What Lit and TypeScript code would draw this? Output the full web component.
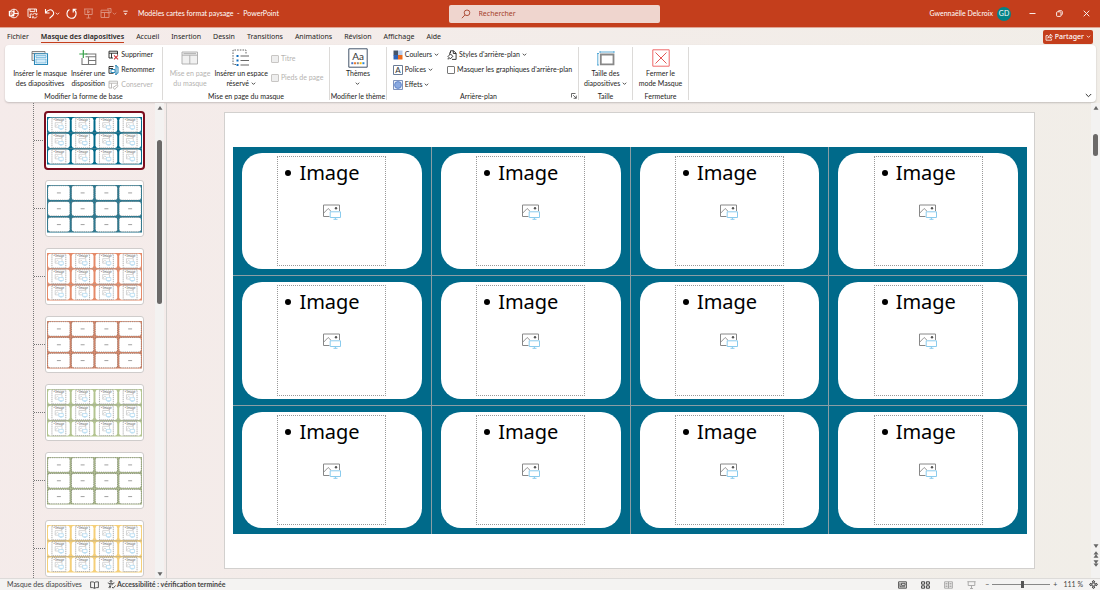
import { LitElement, html, svg, css, nothing } from "lit";
import { customElement, property } from "lit/decorators.js";
import { classMap } from "lit/directives/class-map.js";

const chev = html`<svg class="chev" width="5" height="5" viewBox="0 0 5 5" fill="none" stroke="currentColor" stroke-width=".8"><path d="M.8 1.7 2.5 3.4 4.2 1.7"/></svg>`;

const icon = (w: number, h: number, body: unknown) =>
  html`<svg width=${w} height=${h} viewBox="0 0 ${w} ${h}" fill="none" stroke="currentColor" stroke-width=".9" aria-hidden="true">${body}</svg>`;

const icons = {
  logo: icon(11, 11, svg`<circle cx="6" cy="5.5" r="4.3"/><path d="M6 1.2v4.3h4.3"/><rect x=".8" y="2.8" width="5.6" height="5.6" rx=".8" fill="#fff" stroke="none"/><path d="M2.8 7.4V4h1.1a1 1 0 0 1 0 2.1H2.8" stroke="#c43e1c"/>`),
  save: icon(11, 11, svg`<path d="M4 9.5H2.2L1 8.3V1h8.5v3.2M3 1v2.6h4.8V1M3.2 9.3V6h2"/><path d="M5.5 7.2a2.4 2.4 0 0 1 4.4-.6M10 5.2v1.6H8.4M10 8.4a2.4 2.4 0 0 1-4.3.5M5.4 10.3V8.8H7" stroke-width=".8"/>`),
  undo: icon(11, 11, svg`<path d="M1.5 1v4h4M1.7 4.8C4 1.4 7 1.2 8.6 2.8s1.3 3.5 0 4.7L5.5 10.3" stroke-width="1.1"/>`),
  redo: icon(11, 11, svg`<path d="M3.4 1.5C1.6 2.5.9 4 1 5.6a4.5 4.5 0 1 0 6.3-4M7.2 4.6V1.2h3.3" stroke-width="1.1"/>`),
  present: icon(11, 11, svg`<path d="M1 1h9M1.8 1v5.5h7.4V1M5.5 6.5V10M3.5 10h4M4.6 2.5v2.6l2-1.3z"/>`),
  layout: icon(12, 11, svg`<path d="M1 2.2h8v7.3H1zM1 4.5h8M4.5 4.5v5M7 1l4-.5v4L7.5 5"/>`),
  more: icon(5, 7, svg`<path d="M.3 1.2h4.4"/><path d="M.8 3.2h3.4L2.5 5z" fill="currentColor" stroke="none"/>`),
  search: icon(10, 10, svg`<circle cx="6" cy="3.8" r="2.8"/><path d="M4 5.9.9 9.2"/>`),
  min: icon(7, 7, svg`<path d="M.5 3.5h6"/>`),
  restore: icon(7, 7, svg`<rect x=".6" y="1.8" width="4.4" height="4.6" rx=".8"/><path d="M2.2 1.6C2.3.9 2.6.6 3.3.6h1.4c1.1 0 1.7.6 1.7 1.7v1.5c0 .7-.4 1-1 1.2"/>`),
  close: icon(7, 7, svg`<path d="m.7.7 5.6 5.6M6.3.7.7 6.3"/>`),
  share: icon(8, 8, svg`<path d="M3 2.6H1v4.6h5.6V5.6M2.8 5.2c.3-2 1.3-2.6 2.6-2.6V1.1l2 2.2-2 2V3.9C4.2 3.9 3.4 4.3 2.8 5.2z" stroke-width=".8"/>`),
  master: icon(18, 16, svg`<path d="M1 1.5h13v9H1z" fill="#eee" stroke="#777"/><path d="M1 3.5h13" stroke="#777"/><path d="M3.5 3.7h13v10.8h-13z" fill="#fff" stroke="#2b88b8" stroke-width="1.1"/><path d="M5 5.5h10v2H5zM5 9h10v4H5z" fill="#d3ebf9" stroke="#4aa3d2" stroke-width=".6"/>`),
  insLayout: icon(18, 16, svg`<path d="M6.5 4h10.3v10.5H3V8M6.5 6.8h10.3M9.5 6.8v7.7M9.5 10.5h7.3" stroke="#777" stroke-width="1.1"/><path d="M4.3 0v8M.3 4h8" stroke="#35a048" stroke-width="1.2"/>`),
  del: icon(11, 10, svg`<path d="M5 8H1V1.2h8.5v3.5M1 3.2h8.5M3.5 3.2V8"/><path d="m6 5.3 4 4M10 5.3l-4 4" stroke="#d13438" stroke-width="1.1"/>`),
  ren: icon(11, 10, svg`<path d="M5.5 8.3H1V1.5h4.5M1 3.5h4" /><path d="M8.4 1.8H10v6.4H8.4M3 4.5h4v3H3zM7 .7h2M8 .7v8.6M7 9.3h2" stroke="#2b88b8" stroke-width="1"/>`),
  keep: icon(11, 10, svg`<path d="M4 8H1V1.2h8.5v3M1 3.2h8.5M3.5 3.2V8M5 7.5l4.5-3 .5 1.8-2.8 2.4-.5.8z"/>`),
  pageLayout: icon(18, 16, svg`<path d="M1 2h15.5v12H1z" fill="#f1f1f1" stroke="#aaa"/><path d="M1 5.2h15.5M8.8 5.2V14M2.5 3.6H15" stroke="#aaa"/>`),
  placeholder: icon(18, 18, svg`<path d="M4 15.5H1V1h13v4" stroke="#555" stroke-dasharray="1.6 1.1"/><path d="M8.5 7H17M8.5 11.5H17M8.5 16H17" stroke="#666" stroke-width="1.1"/><path d="M4.5 6h2v2h-2zM4.5 10.5h2v2h-2zM4.5 15h2v2h-2z" fill="#0f6cbd" stroke="none"/>`),
  themes: html`<svg width="20" height="20" viewBox="0 0 20 20" aria-hidden="true"><path d="M.8.8h18.4v18.4H.8z" fill="#fff" stroke="#44546a" stroke-width="1"/><text x="10" y="12" text-anchor="middle" font-size="10" fill="#333">Aa</text><path d="M3.3 14.2h2v2h-2z" fill="#4472c4"/><path d="M6 14.2h2v2H6z" fill="#ed7d31"/><path d="M8.8 14.2h2v2h-2z" fill="#888"/><path d="M11.6 14.2h2v2h-2z" fill="#ffc000"/><path d="M14.4 14.2h2v2h-2z" fill="#2b88d8"/></svg>`,
  colors: icon(10, 10, svg`<g stroke="none"><path d="M.5.5h4.5v5H.5z" fill="#44546a"/><path d="M5 .5h4.5V5H5z" fill="#b8cdeb"/><path d="M.5 5h4.5v4.5H.5z" fill="#2f62b5"/><path d="M5 5h4.5v4.5H5z" fill="#ed6c1e"/></g>`),
  fonts: html`<svg width="10" height="10" viewBox="0 0 10 10" aria-hidden="true"><path d="M.5.5h9v9h-9z" fill="#fff" stroke="#6a7c96"/><text x="5" y="7.8" text-anchor="middle" font-size="8" fill="#333">A</text></svg>`,
  effects: icon(10, 10, svg`<path d="M.5.5h9v9h-9z" fill="#e7edf8" stroke="#6f87b5"/><circle cx="5" cy="5" r="3.4" fill="#8aa9e0" stroke="#5b82c9"/>`),
  bgStyles: icon(10, 10, svg`<path d="M3.5 3V.8h3l2.6 2.4v6.2H5M6.3.8v2.7h2.8"/><path d="m1 6.5 2.5-2.6 2.3 2.4-2.4 2.6z"/><path d="M2.8 4.6V2.4M.6 8.8h1.6"/>`),
  launcher: icon(6, 6, svg`<path d="M.5 4.5v-4h4M2.2 2.2l3 3M5.3 2.6v2.7H2.6" stroke-width=".8"/>`),
  size: icon(18, 16, svg`<path d="M3 2h14M.8 3.5V15M3 1v2M17 1v2M0 3.5h2M0 15h2" stroke="#4aa3d2"/><path d="M3.8 4.5h12.7v9.8H3.8z" fill="#fff" stroke="#888" stroke-width="1.8"/>`),
  closeMaster: icon(18, 18, svg`<path d="M.8.8h16.4v16.4H.8z" fill="#fff" stroke="#f06a6a" stroke-width="1"/><path d="m3.5 3.5 11 11M14.5 3.5l-11 11" stroke="#e04444"/>`),
  picture: html`<svg width="18" height="16" viewBox="0 0 18 16" fill="none" aria-hidden="true"><path d="M6.5 12.5h-6V1h16v6" stroke="#888"/><path d="m.8 9 4.4-4.5L8 7.3" stroke="#888" stroke-width=".9"/><circle cx="13" cy="4.2" r="1.2" fill="#555"/><path d="M7.2 7.8h10.3v5.7H7.2zM10.5 15.3h4M12.4 13.5v1.8" fill="#fff" stroke="#8acbed"/></svg>`,
  up: icon(6, 6, svg`<path d="M.5 4.8h5L3 1z" fill="#666" stroke="none"/>`),
  down: icon(6, 6, svg`<path d="M.5 1.2h5L3 5z" fill="#666" stroke="none"/>`),
  dblUp: icon(6, 7, svg`<path d="M.5 3.6h5L3 .3zM.5 6.8h5L3 3.3z" fill="#666" stroke="none"/>`),
  dblDown: icon(6, 7, svg`<path d="M.5 3.4h5L3 6.7zM.5.2h5L3 3.7z" fill="#666" stroke="none"/>`),
  book: icon(9, 8, svg`<path d="M4.5 1.5C3.5.8 2 .8.6.9v5.7c1.4-.1 2.9 0 3.9.7 1-.7 2.5-.8 3.9-.7V.9C7 .8 5.5.8 4.5 1.5v5.8"/>`),
  access: icon(9, 9, svg`<circle cx="4" cy="1.4" r=".9"/><path d="M.8 2.9l2.2.8v1.8L1.8 8M7.4 2.9l-2.3.8v1.5M3 3.7h2M3.8 5.6 3 8.2M5 7l1.2 1.2L8.5 5.5"/>`),
  vNormal: icon(9, 8, svg`<path d="M.6.8h7.8v6.4H.6zM2 2.2v3.6M3.5 2.3h3.6v2H3.5zM2 5.8h5.2" stroke-width=".9"/>`),
  vSorter: icon(9, 8, svg`<path d="M.6.8h3v2.4h-3zM5.4.8h3v2.4h-3zM.6 4.8h3v2.4h-3zM5.4 4.8h3v2.4h-3z" stroke-width="1"/>`),
  vRead: icon(9, 8, svg`<path d="M.6.8h3.9v6.4H.6zM4.5.8h3.9v6.4H4.5zM1.5 2.5h2M1.5 4h2M1.5 5.5h2M5.5 2.5h2M5.5 4h2M5.5 5.5h2"/>`),
  vShow: icon(9, 8, svg`<path d="M.4.7h8.2M1.2.7v3.8h6.6V.7M4.5 4.5v3M3 7.5h3"/>`),
  fit: icon(9, 9, svg`<path d="M3 3h3v3H3zM4.5.3 6 2H3zM4.5 8.7 3 7h3zM.3 4.5 2 3v3zM8.7 4.5 7 6V3z"/>`),
};

interface Thumb { color: string; image: boolean; label: string }

const thumbs: Thumb[] = [
  { color: "#006a8a", image: true, label: "Images bleu" },
  { color: "#1d7b98", image: false, label: "Texte bleu" },
  { color: "#e58a68", image: true, label: "Images orange" },
  { color: "#e58a68", image: false, label: "Texte orange" },
  { color: "#b3c490", image: true, label: "Images vert" },
  { color: "#b3c490", image: false, label: "Texte vert" },
  { color: "#f5cf78", image: true, label: "Images jaune" },
];

@customElement("layout-thumb")
export class LayoutThumb extends LitElement {
  @property() color = "#006a8a";
  @property({ type: Boolean }) image = false;

  static styles = css`
    :host { display: block; }
    .page { display: block; width: 100%; }
    .hint { font: 3px "Noto Sans", sans-serif; fill: #555; }
  `;

  private cell(i: number) {
    const x = (i % 4) * 24, y = Math.floor(i / 4) * 16;
    return svg`
      <rect x=${x + 1} y=${y + 0.8} width="22" height="14.4" rx="2.4" fill="#fff"/>
      ${this.image
        ? svg`<rect x=${x + 5} y=${y + 0.9} width="14" height="14.2" fill="none" stroke="#999" stroke-width=".8" stroke-dasharray="1.3 .8"/>
            <text class="hint" x=${x + 6.5} y=${y + 4}>• Image</text>
            <path transform="translate(${x + 8} ${y + 5.3})" d="M4 5H.3V.4h6.9v3M.5 4l2-2 1.5 1.4" fill="none" stroke="#bbb" stroke-width=".6"/>
            <path transform="translate(${x + 8} ${y + 5.3})" d="M4 3.5h4.5v3H4zM5 7.3h2.5" fill="none" stroke="#9cd0ee" stroke-width=".6"/>`
        : svg`<rect x=${x + 0.7} y=${y + 0.7} width="22.6" height="14.6" fill="none" stroke="#777" stroke-width=".7" stroke-dasharray="1.2 1"/>
            <path d="M${x + 10} ${y + 8}h4" stroke="#888" stroke-width=".8"/>`}`;
  }

  render() {
    return html`<svg class="page" viewBox="0 0 96 48">
      <rect width="96" height="48" fill=${this.color}/>
      ${this.image ? svg`<path d="M0 16h96M0 32h96" stroke="#999" stroke-width=".5"/>` : nothing}
      ${Array.from({ length: 12 }, (_, i) => this.cell(i))}
    </svg>`;
  }
}

@customElement("ribbon-group")
export class RibbonGroup extends LitElement {
  @property() label = "";
  @property({ type: Boolean }) launcher = false;

  static styles = css`
    :host { display: flex; flex-direction: column; border-right: 1px solid #dcdad8; margin: 2px 0; box-sizing: border-box; }
    .body { display: flex; flex: 1; min-height: 0; align-items: flex-start; justify-content: center; }
    .foot { display: flex; align-items: center; line-height: 8px; height: 9px; }
    .name { flex: 1; text-align: center; white-space: nowrap; }
    .open { border: 0; background: none; padding: 0 1px; display: flex; color: #444; }
  `;

  render() {
    return html`
      <div class="body"><slot></slot></div>
      <div class="foot"><span class="name">${this.label}</span>
        ${this.launcher ? html`<button class="open" aria-label="Mettre en forme l'arrière-plan">${icons.launcher}</button>` : nothing}
      </div>`;
  }
}

@customElement("app-root")
export class AppRoot extends LitElement {
  static styles = css`
    :host {
      display: flex; flex-direction: column; height: 100vh; overflow: hidden;
      font: 7px/9px Lato, "Noto Sans", sans-serif; color: #252423;
      background: linear-gradient(100deg, #f5ebea, #f1eee8);
    }
    * { box-sizing: border-box; }
    button, input { font: inherit; color: inherit; }
    button { border: 0; background: none; padding: 0; display: flex; align-items: center; }
    svg { flex: none; }
    .title { display: flex; align-items: center; height: 28px; background: #c43e1c; color: #fff; padding: 0 10px 0 8px; border-bottom: 1px solid #e0a594; }
    .side { flex: 1 1 0; display: flex; align-items: center; }
    .quick { display: flex; align-items: center; gap: 6px; }
    .brand { display: flex; margin-right: 2px; }
    .faded { opacity: .45; }
    .doc { margin-left: 10px; white-space: nowrap; }
    .search { display: flex; align-items: center; gap: 8px; width: 211px; height: 18px; margin-left: 10px; padding: 0 12px; background: #efd5ce; color: #a5412a; border-radius: 2px; }
    .search input { border: 0; background: none; outline: 0; padding: 0; flex: 1; font-family: "Noto Sans", sans-serif; }
    .search input::placeholder { color: #a5412a; opacity: 1; }
    .account { justify-content: flex-end; }
    .avatar { width: 14px; height: 14px; border-radius: 50%; background: #038387; display: grid; place-items: center; margin: 0 18px 0 4px; }
    .win { gap: 20px; display: flex; }
    .tabs { display: flex; align-items: center; gap: 12px; height: 17px; padding: 0 7px; font-family: "Noto Sans", sans-serif; }
    .tab { height: 13px; border-bottom: 1px solid transparent; }
    .current { font-weight: 600; border-color: #c43e1c; }
    .share { margin-left: auto; gap: 2px; height: 14px; padding: 0 2px; background: #c43e1c; color: #fff; border-radius: 2px; }
    .share b { font-weight: 500; }
    .ribbon { display: flex; height: 57px; margin: 0 4px 0 5px; background: #fff; border-radius: 4px; box-shadow: 0 1px 2px #0003; }
    .g-base { width: 158px; }
    .g-page { width: 167px; }
    .g-theme { width: 57px; }
    .g-back { width: 192px; }
    .g-size { width: 54px; }
    .g-close { width: 56px; }
    .big { flex-direction: column; line-height: 10px; text-align: center; white-space: nowrap; padding: 0 2px; }
    .pic { height: 21px; display: flex; align-items: center; }
    .off { color: #b5b3b1; }
    .stack { display: flex; flex-direction: column; }
    .small { display: flex; height: 15px; align-items: center; gap: 2px; white-space: nowrap; padding: 0 1px; }
    .wide { margin-left: 6px; }
    .loose { padding: 4px 0 0; gap: 4px; }
    .tick { appearance: none; width: 8px; height: 8px; margin: 0; border: 1px solid #777; border-radius: 1px; background: #fff; }
    .tick:disabled { border-color: #c8c6c4; background: #eee; }
    .fold { margin: auto 4px 4px auto; }
    .main { flex: 1; display: flex; min-height: 0; padding-top: 1px; }
    .panel { width: 167px; display: flex; border-right: 1px solid #d2d0ce; padding-right: 2px; }
    .tree { list-style: none; margin: 0 0 0 33px; padding: 9px 0 0; border-left: 1px dotted #777; flex: 1; overflow: hidden; display: flex; flex-direction: column; gap: 11px; }
    .node { display: flex; align-items: center; }
    .branch { width: 11px; border-top: 1px dotted #777; }
    .thumb { display: block; width: 99px; height: 57px; padding: 4px 1px; background: #fff; border: 1px solid #cfcccb; border-radius: 3px; flex: none; }
    .chosen { border-color: #fff; outline: 2px solid #7b0d1e; outline-offset: -1px; }
    .scroll { display: flex; flex-direction: column; align-items: center; width: 9px; background: #f3f2f1; }
    .scroll button { height: 9px; }
    .track { flex: 1; display: flex; flex-direction: column; align-items: center; }
    .grip { width: 5px; background: #6b6968; border-radius: 3px; }
    .grip-list { height: 164px; margin-top: 28px; }
    .grip-page { height: 22px; margin-top: 22px; }
    .pager { padding-bottom: 10px; }
    .stage { flex: 1; display: flex; padding: 9px 56px 9px 57px; }
    .slide { flex: 1; background: #fff; border: 1px solid #d2d0ce; padding: 34px 7px 34px 8px; display: flex; }
    .grid { flex: 1; display: grid; grid-template-columns: repeat(4, 1fr); grid-template-rows: repeat(3, 1fr); gap: 1px; background: #8a9ea5; }
    .cell { background: #006a8a; padding: 6px 9px; display: flex; }
    .card { flex: 1; background: #fff; border-radius: 20px; padding: 3px 0; display: flex; justify-content: center; }
    .holder { width: 109px; border: 1px dotted #999; display: flex; flex-direction: column; align-items: center; color: #000; }
    .bullet { list-style: none; margin: 1px 0 16px; padding: 0 0 0 7px; width: 100%; font: 20px/30px "Noto Sans", sans-serif; }
    .bullet li { display: flex; align-items: center; gap: 8px; }
    .bullet li::before { content: ""; width: 6px; height: 6px; border-radius: 50%; background: #000; }
    .status { display: flex; align-items: center; height: 12px; padding: 0 2px 0 7px; background: #f4f3f2; border-top: 1px solid #dddbd9; color: #444; }
    .status b { margin-left: 1px; }
    .lang { margin: 0 8px; }
    .views { margin-left: auto; display: flex; gap: 14px; margin-right: 9px; }
    .zoom { appearance: none; width: 58px; height: 8px; margin: 0 3px; background: linear-gradient(#888, #888) center / 100% 1px no-repeat; }
    .zoom::-webkit-slider-thumb { appearance: none; width: 3px; height: 7px; background: #555; }
    .pct { margin: 0 6px; }
  `;

  private small(pic: unknown, text: string, drop = false, off = false) {
    return html`<button class=${classMap({ small: true, off })} ?disabled=${off}>${pic}<span>${text}</span>${drop ? chev : nothing}</button>`;
  }

  private big(pic: unknown, a: string, b: unknown, off = false) {
    return html`<button class=${classMap({ big: true, off })} ?disabled=${off}><span class="pic">${pic}</span><span>${a}<br />${b}</span></button>`;
  }

  render() {
    const tabs = ["Fichier", "Masque des diapositives", "Accueil", "Insertion", "Dessin", "Transitions", "Animations", "Révision", "Affichage", "Aide"];
    return html`
      <header class="title">
        <div class="side">
          <div class="quick">
            <span class="brand">${icons.logo}</span>
            <button aria-label="Enregistrer">${icons.save}</button>
            <button aria-label="Annuler">${icons.undo}${chev}</button>
            <button aria-label="Répéter">${icons.redo}</button>
            <button class="faded" aria-label="Diaporama">${icons.present}</button>
            <button class="faded" aria-label="Disposition">${icons.layout}${chev}</button>
            <button aria-label="Personnaliser">${icons.more}</button>
          </div>
          <span class="doc">Modèles cartes format paysage &nbsp;-&nbsp; PowerPoint</span>
        </div>
        <label class="search">${icons.search}<input type="text" placeholder="Rechercher" aria-label="Rechercher" /></label>
        <div class="side account">
          <span>Gwennaëlle Delcroix</span><span class="avatar">GD</span>
          <div class="win">
            <button aria-label="Réduire">${icons.min}</button>
            <button aria-label="Restaurer">${icons.restore}</button>
            <button aria-label="Fermer">${icons.close}</button>
          </div>
        </div>
      </header>
      <nav class="tabs">
        ${tabs.map((t, i) => html`<button class=${classMap({ tab: true, current: i === 1 })}>${t}</button>`)}
        <button class="share">${icons.share}<b>Partager</b>${chev}</button>
      </nav>
      <section class="ribbon">
        <ribbon-group class="g-base" label="Modifier la forme de base">
          ${this.big(icons.master, "Insérer le masque", "des diapositives")}
          ${this.big(icons.insLayout, "Insérer une", "disposition")}
          <div class="stack">
            ${this.small(icons.del, "Supprimer")}${this.small(icons.ren, "Renommer")}${this.small(icons.keep, "Conserver", false, true)}
          </div>
        </ribbon-group>
        <ribbon-group class="g-page" label="Mise en page du masque">
          ${this.big(icons.pageLayout, "Mise en page", "du masque", true)}
          ${this.big(icons.placeholder, "Insérer un espace", html`réservé ${chev}`)}
          <div class="stack loose">
            <label class="small off"><input class="tick" type="checkbox" disabled />Titre</label>
            <label class="small off"><input class="tick" type="checkbox" disabled />Pieds de page</label>
          </div>
        </ribbon-group>
        <ribbon-group class="g-theme" label="Modifier le thème">
          ${this.big(icons.themes, "Thèmes", chev)}
        </ribbon-group>
        <ribbon-group class="g-back" label="Arrière-plan" launcher>
          <div class="stack">
            ${this.small(icons.colors, "Couleurs", true)}${this.small(icons.fonts, "Polices", true)}${this.small(icons.effects, "Effets", true)}
          </div>
          <div class="stack wide">
            ${this.small(icons.bgStyles, "Styles d'arrière-plan", true)}
            <label class="small"><input class="tick" type="checkbox" />Masquer les graphiques d'arrière-plan</label>
          </div>
        </ribbon-group>
        <ribbon-group class="g-size" label="Taille">
          ${this.big(icons.size, "Taille des", html`diapositives ${chev}`)}
        </ribbon-group>
        <ribbon-group class="g-close" label="Fermeture">
          ${this.big(icons.closeMaster, "Fermer le", "mode Masque")}
        </ribbon-group>
        <button class="fold" aria-label="Réduire le ruban"><svg width="7" height="5" viewBox="0 0 7 5" fill="none" stroke="#333"><path d="M.8 1 3.5 3.7 6.2 1"/></svg></button>
      </section>
      <main class="main">
        <aside class="panel">
          <ul class="tree">
            ${thumbs.map((t, i) => html`<li class="node"><span class="branch"></span>
              <button class=${classMap({ thumb: true, chosen: i === 0 })} aria-label=${t.label}><layout-thumb .color=${t.color} .image=${t.image}></layout-thumb></button></li>`)}
          </ul>
          <div class="scroll">
            <button aria-label="Haut">${icons.up}</button>
            <div class="track"><div class="grip grip-list"></div></div>
            <button aria-label="Bas">${icons.down}</button>
          </div>
        </aside>
        <div class="stage">
          <article class="slide">
            <div class="grid">
              ${Array.from({ length: 12 }, () => html`<div class="cell"><div class="card"><div class="holder">
                <ul class="bullet"><li>Image</li></ul>${icons.picture}
              </div></div></div>`)}
            </div>
          </article>
        </div>
        <div class="scroll pager">
          <button aria-label="Haut">${icons.up}</button>
          <div class="track"><div class="grip grip-page"></div></div>
          <button aria-label="Bas">${icons.down}</button>
          <button aria-label="Diapositive précédente">${icons.dblUp}</button>
          <button aria-label="Diapositive suivante">${icons.dblDown}</button>
        </div>
      </main>
      <footer class="status">
        <span>Masque des diapositives</span>
        <button class="lang" aria-label="Vérification">${icons.book}</button>
        ${icons.access}<b>Accessibilité : vérification terminée</b>
        <div class="views">
          <button aria-label="Normal">${icons.vNormal}</button>
          <button aria-label="Trieuse">${icons.vSorter}</button>
          <button class="faded" aria-label="Lecture">${icons.vRead}</button>
          <button class="faded" aria-label="Diaporama">${icons.vShow}</button>
        </div>
        <button aria-label="Zoom arrière">−</button>
        <input class="zoom" type="range" min="0" max="100" value="52" aria-label="Zoom" />
        <button aria-label="Zoom avant">+</button>
        <span class="pct">111 %</span>
        <button aria-label="Ajuster">${icons.fit}</button>
      </footer>`;
  }
}
